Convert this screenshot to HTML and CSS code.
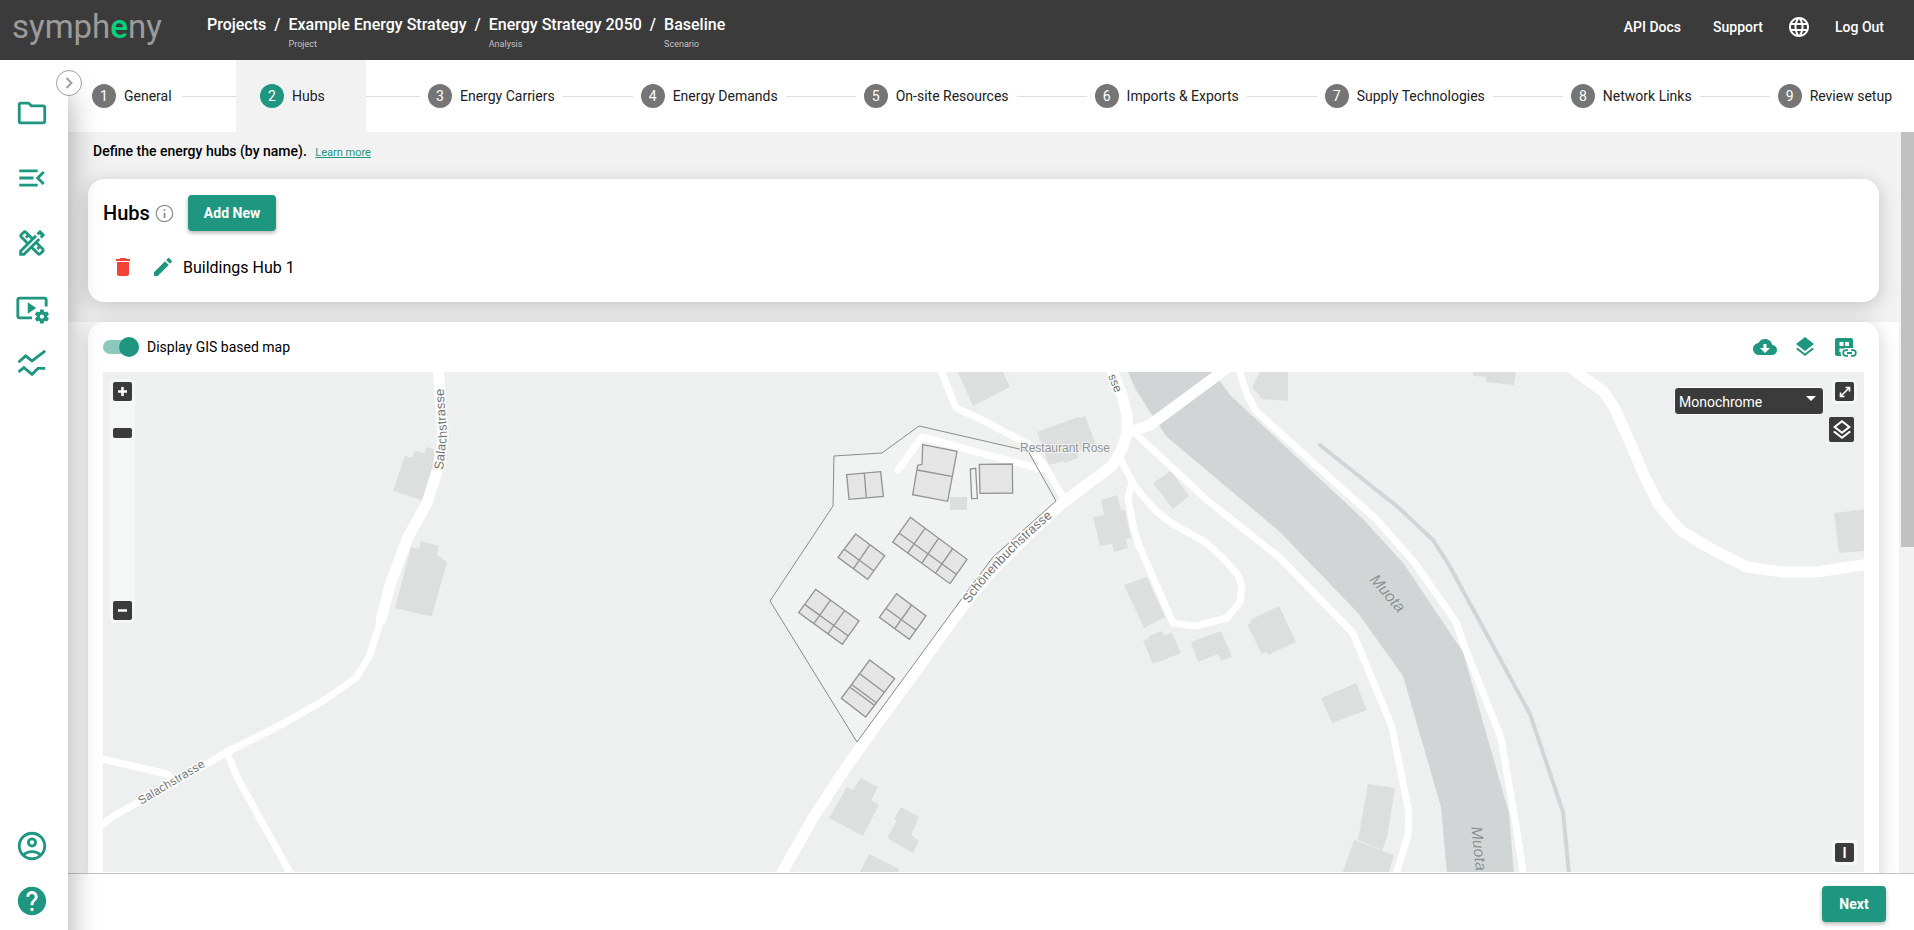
FILE: index.html
```html
<!DOCTYPE html>
<html lang="en">
<head>
    <meta charset="UTF-8">
    <meta name="viewport" content="width=device-width, initial-scale=1.0">
    <title>Sympheny - Hubs</title>
    <link rel="stylesheet" href="styles.css">
</head>
<body>
    <header class="topbar">
        <a href="#" class="logo">symph<span>e</span>ny</a>
        <nav class="breadcrumbs" aria-label="Breadcrumb">
            <a href="#" class="crumb">Projects</a>
            <span class="slash">/</span>
            <a href="#" class="crumb">Example Energy Strategy<small>Project</small></a>
            <span class="slash">/</span>
            <a href="#" class="crumb">Energy Strategy 2050<small>Analysis</small></a>
            <span class="slash">/</span>
            <a href="#" class="crumb">Baseline<small>Scenario</small></a>
        </nav>
        <nav class="top-links">
            <a href="#">API Docs</a>
            <a href="#">Support</a>
            <button type="button" class="icon-btn language" aria-label="Language">
                <svg width="24" height="24" viewBox="0 0 24 24" fill="currentColor"><path d="M11.99 2C6.47 2 2 6.48 2 12s4.47 10 9.99 10C17.52 22 22 17.52 22 12S17.52 2 11.99 2zm6.93 6h-2.95c-.32-1.25-.78-2.45-1.38-3.56 1.84.63 3.37 1.91 4.33 3.56zM12 4.04c.83 1.2 1.48 2.53 1.91 3.96h-3.82c.43-1.43 1.08-2.76 1.91-3.96zM4.26 14C4.1 13.36 4 12.69 4 12s.1-1.36.26-2h3.38c-.08.66-.14 1.32-.14 2s.06 1.34.14 2H4.26zm.82 2h2.95c.32 1.25.78 2.45 1.38 3.56-1.84-.63-3.37-1.9-4.33-3.56zm2.95-8H5.08c.96-1.66 2.49-2.93 4.33-3.56C8.81 5.55 8.35 6.75 8.03 8zM12 19.96c-.83-1.2-1.48-2.53-1.91-3.96h3.82c-.43 1.43-1.08 2.76-1.91 3.96zM14.34 14H9.66c-.09-.66-.16-1.32-.16-2s.07-1.35.16-2h4.68c.09.65.16 1.32.16 2s-.07 1.34-.16 2zm.25 5.56c.6-1.11 1.06-2.31 1.38-3.56h2.95c-.96 1.65-2.49 2.93-4.33 3.56zM16.36 14c.08-.66.14-1.32.14-2s-.06-1.34-.14-2h3.38c.16.64.26 1.31.26 2s-.1 1.36-.26 2h-3.38z"/></svg>
            </button>
            <a href="#">Log Out</a>
        </nav>
    </header>

    <div class="layout">
        <aside class="sidebar">
            <button type="button" class="expand-btn" aria-label="Expand menu">
                <svg viewBox="0 0 12 14"><path d="M3.5 2l5 5-5 5"/></svg>
            </button>
            <a href="#" aria-label="Projects">
                <svg viewBox="0 0 24 24"><path d="M9.17 6l2 2H20v10H4V6h5.17M10 4H4c-1.1 0-1.99.9-1.99 2L2 18c0 1.1.9 2 2 2h16c1.1 0 2-.9 2-2V8c0-1.1-.9-2-2-2h-8l-2-2z"/></svg>
            </a>
            <a href="#" aria-label="Scenarios">
                <svg viewBox="0 0 24 24"><path d="M3 18h13v-2H3v2zm0-5h10v-2H3v2zm0-7v2h13V6H3zm18 9.59L17.42 12 21 8.41 19.59 7l-5 5 5 5L21 15.59z"/></svg>
            </a>
            <a href="#" aria-label="Design">
                <svg viewBox="0 0 24 24"><path d="M16.24 11.51l1.57-1.57-3.75-3.75-1.57 1.57L8.35 3.63c-.78-.78-2.05-.78-2.83 0l-1.9 1.9c-.78.78-.78 2.05 0 2.83l4.13 4.13L3 17.25V21h3.75l4.76-4.76 4.13 4.13c.95.95 2.23.6 2.83 0l1.9-1.9c.78-.78.78-2.05 0-2.83l-4.13-4.13zM9.18 11.07L5.04 6.94l1.89-1.9L8.2 6.31 7.02 7.5l1.41 1.41 1.19-1.19 1.45 1.45-1.89 1.9zm7.88 7.88l-4.13-4.13 1.9-1.9 1.45 1.45-1.19 1.19 1.41 1.41 1.19-1.19 1.27 1.27-1.9 1.9zM20.71 7.04c.39-.39.39-1.02 0-1.41l-2.34-2.34c-.47-.47-1.12-.29-1.41 0l-1.83 1.83 3.75 3.75 1.83-1.83z"/><path d="M5.2 18.8L17.8 6.2" fill="none" stroke="#fff" stroke-width="1.3"/></svg>
            </a>
            <a href="#" aria-label="Run settings">
                <svg viewBox="0 0 24 24"><path d="M3 6h18v5h2V6c0-1.1-.9-2-2-2H3c-1.1 0-2 .9-2 2v12c0 1.1.9 2 2 2h9v-2H3V6z"/><path d="M15 12L9 8v8z"/><path d="M22.71 18.43c.03-.29.04-.58.01-.86l1.07-.85c.1-.08.12-.21.06-.32l-1.03-1.79c-.06-.11-.19-.15-.31-.11l-1.28.5c-.23-.17-.48-.31-.75-.42l-.2-1.36c-.02-.12-.12-.21-.25-.21h-2.07c-.12 0-.23.09-.25.21l-.2 1.36c-.26.11-.51.26-.74.42l-1.28-.5c-.12-.05-.25 0-.31.11l-1.03 1.79c-.06.11-.04.24.06.32l1.07.86c-.03.29-.04.58-.01.86l-1.07.85c-.1.08-.12.21-.06.32l1.03 1.79c.06.11.19.15.31.11l1.27-.5c.23.17.48.31.76.42l.2 1.36c.02.12.12.21.25.21h2.07c.12 0 .23-.09.25-.21l.2-1.36c.26-.11.51-.26.74-.42l1.28.5c.12.05.25 0 .31-.11l1.03-1.79c.06-.11.04-.24-.06-.32l-1.07-.86zM19 19.5c-.83 0-1.5-.67-1.5-1.5s.67-1.5 1.5-1.5 1.5.67 1.5 1.5-.67 1.5-1.5 1.5z"/></svg>
            </a>
            <a href="#" class="results" aria-label="Results">
                <svg viewBox="0 0 24 24"><path d="M2.500 11.500l5-4.500 4.500 3.500 9.300-7M2.500 18.300l3.800-3 5.700 4.700 4.200-4.200h5.100" fill="none" stroke="#1f9680" stroke-width="2"/></svg>
            </a>
            <a href="#" class="account" aria-label="Account">
                <svg viewBox="0 0 24 24"><path d="M12 2C6.48 2 2 6.48 2 12s4.48 10 10 10 10-4.48 10-10S17.52 2 12 2zM7.35 18.5C8.66 17.56 10.26 17 12 17s3.34.56 4.65 1.5c-1.31.94-2.91 1.5-4.65 1.5s-3.34-.56-4.65-1.5zm10.79-1.38C16.45 15.8 14.32 15 12 15s-4.45.8-6.14 2.12C4.7 15.73 4 13.95 4 12c0-4.42 3.58-8 8-8s8 3.58 8 8c0 1.95-.7 3.73-1.86 5.12zM12 6c-1.93 0-3.5 1.57-3.5 3.5S10.07 13 12 13s3.5-1.57 3.5-3.5S13.93 6 12 6zm0 5c-.83 0-1.5-.67-1.5-1.5S11.17 8 12 8s1.5.67 1.5 1.5S12.83 11 12 11z"/></svg>
            </a>
            <a href="#" class="help" aria-label="Help">
                <svg viewBox="0 0 24 24"><path d="M12 2C6.48 2 2 6.48 2 12s4.48 10 10 10 10-4.48 10-10S17.52 2 12 2zm1 17h-2v-2h2v2zm2.07-7.75l-.9.92C13.45 12.9 13 13.5 13 15h-2v-.5c0-1.1.45-2.1 1.17-2.83l1.24-1.26c.37-.36.59-.86.59-1.41 0-1.1-.9-2-2-2s-2 .9-2 2H8c0-2.21 1.79-4 4-4s4 1.79 4 4c0 .88-.36 1.68-.93 2.25z"/></svg>
            </a>
        </aside>

        <main class="main">
            <nav class="stepper" aria-label="Steps">
                <a href="#" class="step"><span class="num">1</span><span class="label">General</span></a>
                <span class="line"></span>
                <a href="#" class="step active"><span class="num">2</span><span class="label">Hubs</span></a>
                <span class="line"></span>
                <a href="#" class="step"><span class="num">3</span><span class="label">Energy Carriers</span></a>
                <span class="line"></span>
                <a href="#" class="step"><span class="num">4</span><span class="label">Energy Demands</span></a>
                <span class="line"></span>
                <a href="#" class="step"><span class="num">5</span><span class="label">On-site Resources</span></a>
                <span class="line"></span>
                <a href="#" class="step"><span class="num">6</span><span class="label">Imports &amp; Exports</span></a>
                <span class="line"></span>
                <a href="#" class="step"><span class="num">7</span><span class="label">Supply Technologies</span></a>
                <span class="line"></span>
                <a href="#" class="step"><span class="num">8</span><span class="label">Network Links</span></a>
                <span class="line"></span>
                <a href="#" class="step"><span class="num">9</span><span class="label">Review setup</span></a>
            </nav>

            <div class="scroll-area">
                <div class="content">
                    <section class="hubs-section">
                        <p class="intro">Define the energy hubs (by name). <a href="#">Learn more</a></p>
                        <div class="card hubs-card">
                            <div class="hubs-title">
                                <h1>Hubs</h1>
                                <svg width="21" height="21" viewBox="0 0 24 24" fill="#8c8c8c"><path d="M11 7h2v2h-2zm0 4h2v6h-2zm1-9C6.48 2 2 6.48 2 12s4.48 10 10 10 10-4.48 10-10S17.52 2 12 2zm0 18.6c-4.74 0-8.6-3.86-8.6-8.6S7.26 3.4 12 3.4s8.6 3.86 8.6 8.6-3.86 8.6-8.6 8.6z"/></svg>
                                <button type="button" class="btn">Add New</button>
                            </div>
                            <div class="hub-row">
                                <button type="button" class="icon-btn delete" aria-label="Delete hub">
                                    <svg width="24" height="24" viewBox="0 0 24 24" fill="currentColor"><path d="M6 19c0 1.1.9 2 2 2h8c1.1 0 2-.9 2-2V7H6v12zM19 4h-3.5l-1-1h-5l-1 1H5v2h14V4z"/></svg>
                                </button>
                                <button type="button" class="icon-btn edit" aria-label="Edit hub">
                                    <svg width="24" height="24" viewBox="0 0 24 24" fill="currentColor"><path d="M3 17.25V21h3.75L17.81 9.94l-3.75-3.75L3 17.25zM20.71 7.04c.39-.39.39-1.02 0-1.41l-2.34-2.34c-.39-.39-1.02-.39-1.41 0l-1.83 1.83 3.75 3.75 1.83-1.83z"/></svg>
                                </button>
                                <span>Buildings Hub 1</span>
                            </div>
                        </div>
                    </section>

                    <section class="map-section">
                        <div class="card map-card">
                            <div class="map-toolbar">
                                <label class="toggle" for="gisToggle">
                                    <input type="checkbox" id="gisToggle" role="switch" checked>
                                    Display GIS based map
                                </label>
                                <div class="map-actions">
                                    <button type="button" class="icon-btn" aria-label="Download">
                                        <svg width="24" height="24" viewBox="0 0 24 24" fill="currentColor"><path d="M19.35 10.04C18.67 6.59 15.64 4 12 4 9.11 4 6.6 5.64 5.35 8.04 2.34 8.36 0 10.91 0 14c0 3.31 2.69 6 6 6h13c2.76 0 5-2.24 5-5 0-2.64-2.05-4.78-4.65-4.96zM17 13l-5 5-5-5h3.5V9h3v4H17z"/></svg>
                                    </button>
                                    <button type="button" class="icon-btn" aria-label="Layers">
                                        <svg width="24" height="24" viewBox="0 0 24 24" fill="currentColor"><path d="M11.99 18.54l-7.37-5.73L3 14.07l9 7 9-7-1.63-1.27-7.38 5.74zM12 16l7.36-5.73L21 9l-9-7-9 7 1.63 1.27L12 16z"/></svg>
                                    </button>
                                    <button type="button" class="icon-btn" aria-label="Link dataset">
                                        <svg width="24" height="24" viewBox="0 0 24 24" fill="currentColor"><path fill-rule="evenodd" d="M4 3h14a2 2 0 0 1 2 2v8h-7a5 5 0 0 0-4.500 8H4a2 2 0 0 1-2-2V5a2 2 0 0 1 2-2zm2.500 4v4h4V7h-4zm5.500 0v4h4V7h-4z"/><path d="M6.500 13.500h3L7.500 17h-1z" fill="#fff"/><path d="M15 15.200h-2a2.800 2.800 0 0 0 0 5.600h2M18 15.200h2a2.800 2.800 0 0 1 0 5.600h-2M14 18h5" fill="none" stroke="currentColor" stroke-width="1.800"/></svg>
                                    </button>
                                </div>
                            </div>

                            <div class="map">
                                <svg class="map-drawing" viewBox="103 372 1761 500" preserveAspectRatio="xMidYMid slice" role="img" aria-label="Site map">
                                    <!-- river -->
                                    <path class="water" d="M1127 370L1136 390 1152 415 1167 437 1280 532 1358 613 1403 676 1441 807 1447 874H1514L1509 813 1463 652 1404 564 1363 519 1230 395 1212 370z"/>
                                    <path class="stream" d="M1320 445L1399 508 1433 540 1449 565 1530 714 1563 812 1569 874"/>

                                    <!-- surrounding buildings -->
                                    <g class="building">
                                        <path d="M393 491L405 456 412 458 415 451 424 453 427 447 437 450 438 462 424 501z"/>
                                        <path d="M395 608L411 547 419 549 421 541 439 546 437 555 447 562 432 616 424 615z"/>
                                        <path d="M957 370H1002L1010 387 973 406z"/>
                                        <path d="M1037 432L1078 417 1080 418 1085 416 1096 445 1077 452 1078 458 1065 463 1063 461 1049 465z"/>
                                        <path d="M1153 483L1171 471 1189 496 1173 509z"/>
                                        <path d="M1101 500L1117 495 1121 510 1125 510 1131 538 1126 539 1128 548 1114 552 1112 544 1100 546 1093 517 1104 515z"/>
                                        <path d="M1124 585L1147 577 1165 617 1144 628z"/>
                                        <path d="M1143 641L1149 639 1149 636 1162 631 1164 635 1172 633 1181 653 1153 664z"/>
                                        <path d="M1191 642L1221 631 1232 657 1221 661 1218 654 1198 662z"/>
                                        <path d="M1247 625L1251 623 1250 620 1279 606 1296 642 1268 655 1267 652 1262 654z"/>
                                        <path d="M1252 387L1261 370H1288V401L1262 399z"/>
                                        <path d="M1321 698L1356 683 1367 710 1332 723z"/>
                                        <path d="M1473 370H1516L1514 385 1486 382V377L1473 376z"/>
                                        <path d="M1834 513L1865 509V551L1839 553z"/>
                                        <path d="M1368 784L1395 788 1387 838 1382 850 1358 840z"/>
                                        <path d="M1354 840L1394 855 1388 874H1342z"/>
                                        <path d="M829 818L847 787 853 790 861 778 878 787 871 800 879 805 863 836z"/>
                                        <path d="M887 838L897 820 894 819 901 807 919 817 911 835 919 841 913 853z"/>
                                        <path d="M859 874L869 854 899 869V874z"/>
                                    </g>

                                    <!-- roads -->
                                    <g class="road">
                                        <path class="wide" d="M438 366L443 438 438 468 427 503 408 537 390 585 381 620"/>
                                        <path d="M381 620L369 657 356 678 323 701 277 727 227 752 170 785 115 815 98 828"/>
                                        <path d="M227 752L237 777 293 878"/>
                                        <path d="M98 758L167 774 175 783"/>
                                        <path d="M939 366L956 408 982 420 1028 444 1044 465 1062 495"/>
                                        <path class="wide" d="M779 878L813 818 843 772 865 741 972 594 997 566 1010 553 1060 505 1113 465 1122 449 1127 433 1127 415 1122 395 1110 366"/>
                                        <path class="wide" d="M1127 433L1150 425 1230 366"/>
                                        <path d="M1137 435L1207 500 1280 558 1353 633 1392 727 1409 813 1408 835 1395 878"/>
                                        <path d="M1120 458L1135 487 1155 510 1170 522 1205 542 1223 558 1238 575 1242 586 1240 602 1227 618 1196 626 1173 623 1152 575 1138 543 1133 525 1128 498 1132 483"/>
                                        <path d="M1238 366L1247 395 1257 412 1377 520 1414 562 1456 622 1464 645 1501 738 1516 825 1524 878"/>
                                        <path class="wide" d="M1568 366L1604 392 1614 407 1629 440 1644 475 1659 505 1680 530 1713 550 1747 567 1782 572 1816 572 1870 564"/>
                                    </g>

                                    <!-- project site -->
                                    <path class="site" d="M834 456L882 453 919 426 1028 451 1056 501 993 557 963 597 857 742 770 601 833 506z"/>
                                    <path class="road" d="M898 470L922 437 1040 469"/>
                                    <path class="building" d="M950 497h17v13h-17z"/>
                                    <path class="site-line" d="M834 456L882 453 919 426 1028 451 1056 501 993 557 963 597 857 742 770 601 833 506z"/>
                                    <g class="house" transform="translate(750 410) scale(.33333)">
                                        <path d="M290 194L392 185 400 259 297 268zM343 190L349 263"/>
                                        <path d="M518 104L621 124 593 274 488 254 503 166 516 163zM502 180L605 199"/>
                                        <path class="empty" d="M661 177L677 175 682 265 665 266z"/>
                                        <path d="M688 163L787 162 788 249 690 250z"/>
                                        <path d="M481 322L651 448 600 521 428 396zM447 369L619 493M525 355L474 428M565 386L515 460M607 417L556 490"/>
                                        <path d="M317 372L404 437 353 508 264 442zM283 418L372 483M360 404L311 475"/>
                                        <path d="M197 538L327 633 277 703 146 608zM165 584L295 678M241 571L192 640M284 602L234 671"/>
                                        <path d="M440 551L528 618 478 688 388 622zM407 595L497 660M485 585L435 655"/>
                                        <path d="M359 750L434 806 347 921 274 865zM330 792L403 847M306 824L379 878M300 832L373 886"/>
                                    </g>

                                    <!-- labels follow their own paths -->
                                    <defs>
                                        <path id="lblSalachN" d="M443 470L447 435 443 380"/>
                                        <path id="lblSalachW" d="M141 805L211 763 240 746"/>
                                        <path id="lblSchoenen" d="M969 604Q997 563 1058 512"/>
                                        <path id="lblNorth" d="M1108 376L1123 413"/>
                                        <path id="lblMuotaN" d="M1369 580L1410 627"/>
                                        <path id="lblMuotaS" d="M1471 827L1479 900"/>
                                    </defs>
                                    <g class="map-label">
                                        <text class="street"><textPath href="#lblSalachN">Salachstrasse</textPath></text>
                                        <text><textPath href="#lblSalachW">Salachstrasse</textPath></text>
                                        <text class="street"><textPath href="#lblSchoenen">Schönenbuchstrasse</textPath></text>
                                        <text><textPath href="#lblNorth">sse</textPath></text>
                                        <text class="place" x="1020" y="452">Restaurant Rose</text>
                                        <text class="river"><textPath href="#lblMuotaN">Muota</textPath></text>
                                        <text class="river"><textPath href="#lblMuotaS">Muota</textPath></text>
                                    </g>
                                </svg>

                                <div class="zoom-control">
                                    <button type="button" class="map-btn" aria-label="Zoom in">
                                        <svg width="9" height="9" viewBox="0 0 9 9"><path d="M0 4.500h9M4.500 0v9" stroke="#fff" stroke-width="2.500"/></svg>
                                    </button>
                                    <div class="zoom-track"><button type="button" class="zoom-thumb" aria-label="Zoom level"></button></div>
                                    <button type="button" class="map-btn" aria-label="Zoom out">
                                        <svg width="9" height="9" viewBox="0 0 9 9"><path d="M0 4.500h9" stroke="#fff" stroke-width="2.500"/></svg>
                                    </button>
                                </div>
                                <div class="map-tools">
                                    <div class="basemap">
                                        <select aria-label="Base map">
                                            <option>Monochrome</option>
                                            <option>Satellite</option>
                                        </select>
                                    </div>
                                    <div class="map-tools-column">
                                        <div class="halo">
                                            <button type="button" class="map-btn" aria-label="Full screen">
                                                <svg width="12" height="12" viewBox="0 0 12 12"><path d="M2 10l8-8M6.500 1.500h4v4M1.500 6.500v4h4" fill="none" stroke="#fff" stroke-width="1.600"/></svg>
                                            </button>
                                        </div>
                                        <button type="button" class="map-btn layers-btn" aria-label="Map layers">
                                            <svg width="24" height="24" viewBox="0 0 24 24" fill="#fff"><path d="M11.99 18.54l-7.37-5.73L3 14.07l9 7 9-7-1.63-1.27-7.38 5.74zM12 16l7.36-5.73L21 9l-9-7-9 7 1.63 1.27L12 16zm0-11.47L17.74 9 12 13.47 6.26 9 12 4.53z"/></svg>
                                        </button>
                                    </div>
                                </div>
                                <div class="halo attribution">
                                    <button type="button" class="map-btn" aria-label="Attribution">I</button>
                                </div>
                            </div>
                        </div>
                    </section>
                </div>
                <div class="scrollbar"><div class="scrollbar-thumb"></div></div>
            </div>

            <footer class="footer">
                <button type="button" class="btn">Next</button>
            </footer>
        </main>
    </div>
</body>
</html>
```
FILE: styles.css
```css
* { box-sizing: border-box; }
body { font-family: Roboto, sans-serif; font-size: 14px; color: #000; background-color: white; margin: 0; height: 100vh; display: flex; flex-direction: column; overflow: hidden; }
a { color: inherit; text-decoration: none; }
button { font-family: inherit; border: none; padding: 0; cursor: pointer; }
svg { display: block; }

/* Top bar */
.topbar { display: flex; align-items: flex-start; height: 60px; flex: none; padding: 0 30px 0 12px; background-color: #3b3b3b; color: white; position: relative; z-index: 3; }
.logo { width: 195px; font-size: 33px; line-height: 54px; color: #9b9b9b; }
.logo span { color: #06d17f; font-weight: 500; }
.breadcrumbs { display: flex; gap: 8px; padding-top: 15px; font-size: 16px; font-weight: 500; line-height: 20px; }
.crumb small { display: block; font-size: 9px; font-weight: 400; line-height: 10px; margin-top: 4px; color: #c4c4c4; }
.top-links { display: flex; align-items: center; gap: 32px; height: 54px; margin-left: auto; font-weight: 500; }
.icon-btn { display: flex; background: none; color: #1f9680; }
.language { color: white; margin: 0 -8px; }

.layout { display: flex; flex: 1; min-height: 0; }

/* Sidebar */
.sidebar { position: relative; z-index: 2; width: 68px; flex: none; display: flex; flex-direction: column; align-items: center; gap: 31px; padding: 36px 5px 12px 0; background-color: white; box-shadow: 0 36px 32px rgba(0, 0, 0, 0.36); }
.sidebar a svg { width: 34px; height: 34px; fill: #1f9680; }
.expand-btn { position: absolute; top: 10px; right: -14px; width: 26px; height: 26px; display: flex; align-items: center; justify-content: center; background-color: white; border: 1px solid #9e9e9e; border-radius: 50%; }
.expand-btn svg { width: 12px; height: 14px; fill: none; stroke: #9e9e9e; stroke-width: 2; }
.results { margin-top: -10px; }
.account { margin-top: auto; }
.help { margin-top: -10px; }

.main { flex: 1; min-width: 0; display: flex; flex-direction: column; }

/* Stepper */
.stepper { display: flex; align-items: center; height: 72px; flex: none; background-color: white; }
.step { display: flex; align-items: center; gap: 8px; height: 72px; padding: 0 24px; white-space: nowrap; color: #212121; }
.step:last-child { padding-right: 22px; }
.step.active { position: relative; z-index: 1; background-color: #f2f2f2; }
.num { display: flex; align-items: center; justify-content: center; width: 24px; height: 24px; border-radius: 50%; background-color: #757575; color: white; }
.active .num { background-color: #1f9680; }
.label { min-width: 50px; }
.line { flex: 1; min-width: 32px; margin: 0 -16px; border-top: 1px solid #dedede; }

/* Scrolling content */
.scroll-area { flex: 1; min-height: 0; display: flex; overflow: hidden; }
.content { flex: 1; min-width: 0; }
.scrollbar { width: 15px; flex: none; padding-left: 2px; background-color: #f1f1f1; }
.scrollbar-thumb { height: 56%; background-color: #c1c1c1; }
.hubs-section { padding: 0 20px 20px; background-color: #f2f2f2; }
.map-section { padding: 0 20px 20px; background-color: white; }
.intro { margin: 0; padding-left: 5px; font-weight: 500; line-height: 39px; height: 47px; }
.intro a { margin-left: 5px; font-size: 11px; font-weight: 400; color: #1f9680; text-decoration: underline; }
.card { background-color: white; border-radius: 16px; box-shadow: 0 4px 20px rgba(0, 0, 0, 0.2); }

.hubs-card { padding: 16px 15px 11px; }
.hubs-title { display: flex; align-items: center; }
.hubs-title h1 { margin: 0 4px 0 0; font-size: 20px; font-weight: 500; }
.hubs-title .btn { margin-left: 13px; }
.btn { height: 36px; min-width: 64px; padding: 0 16px; border-radius: 4px; background-color: #1f9680; color: white; font-size: 14px; font-weight: 700; box-shadow: 0 2px 4px rgba(0, 0, 0, 0.3); }
.hub-row { display: flex; align-items: center; height: 48px; margin-top: 12px; padding-left: 8px; font-size: 16px; }
.hub-row .delete { color: #f44336; }
.hub-row .edit { margin: 0 8px 0 16px; }

.map-toolbar { display: flex; align-items: center; justify-content: space-between; height: 50px; }
.map-card { padding: 0 15px 15px; }
.toggle { display: flex; align-items: center; gap: 8px; }
.toggle input { appearance: none; position: relative; width: 36px; height: 14px; margin: 0; border-radius: 8px; background-color: #8bc9bd; }
.toggle input::after { content: ""; position: absolute; top: -3px; right: 0; width: 20px; height: 20px; border-radius: 50%; background-color: #1f9680; }
.map-actions { display: flex; gap: 16px; padding-right: 7px; }

/* Map */
.map { position: relative; height: 500px; background-color: #eef0ef; overflow: hidden; }
.map-drawing { width: 100%; height: 100%; }
.water { fill: #d1d5d6; }
.stream { fill: none; stroke: #d1d5d6; stroke-width: 4; stroke-linecap: round; }
.building { fill: #dddfde; }
.road { fill: none; stroke: white; stroke-width: 7; stroke-linecap: round; stroke-linejoin: round; }
.road .wide { stroke-width: 11; }
.site { fill: #f1f3f2; fill-opacity: 0.8; }
.site-line { fill: none; stroke: #8a8c8b; }
.house { fill: #e4e5e4; stroke: #939594; stroke-width: 4; }
.house .empty { fill: none; }
.map-label { font-family: "Liberation Sans", Arial, sans-serif; font-size: 12px; fill: #6e7171; stroke: white; stroke-width: 3; stroke-linejoin: round; paint-order: stroke; }
.map-label .street { font-size: 13px; }
.map-label .place { fill: #8f9393; stroke: #f2f4f3; stroke-width: 2; }
.map-label .river { font-size: 16px; font-style: italic; fill: #8b8f90; stroke: #dde0e1; stroke-width: 1; }

.map-btn { display: flex; align-items: center; justify-content: center; width: 19px; height: 19px; border-radius: 2px; background-color: #3b3b3b; color: white; font-size: 14px; font-weight: 700; }
.halo { padding: 3px; border-radius: 4px; background-color: #f5f7f6; }
.zoom-control { position: absolute; top: 7px; left: 7px; padding: 3px; border-radius: 4px; background-color: #f5f7f6; }
.zoom-track { height: 200px; padding-top: 27px; }
.zoom-thumb { display: block; width: 19px; height: 10px; border-radius: 2px; background-color: #3b3b3b; }
.map-tools { position: absolute; top: 7px; right: 7px; display: flex; align-items: flex-start; }
.map-tools-column { display: flex; flex-direction: column; align-items: flex-end; gap: 13px; }
.layers-btn { width: 25px; height: 25px; margin-right: 3px; }
.basemap { position: relative; margin: 8px 5px 0 0; }
.basemap select { appearance: none; display: block; width: 150px; height: 28px; padding: 1px 4px 0; border: 1px solid white; border-radius: 4px; background-color: #3b3b3b; color: white; font-family: inherit; font-size: 14px; }
.basemap::after { content: ""; position: absolute; top: 9px; right: 8px; border: 5px solid transparent; border-top-color: white; border-bottom: none; pointer-events: none; }
.attribution { position: absolute; right: 7px; bottom: 7px; }

/* Footer */
.footer { flex: none; display: flex; justify-content: flex-end; padding: 12px 28px 8px; border-top: 1px solid #c4c4c4; background-color: white; }
```
